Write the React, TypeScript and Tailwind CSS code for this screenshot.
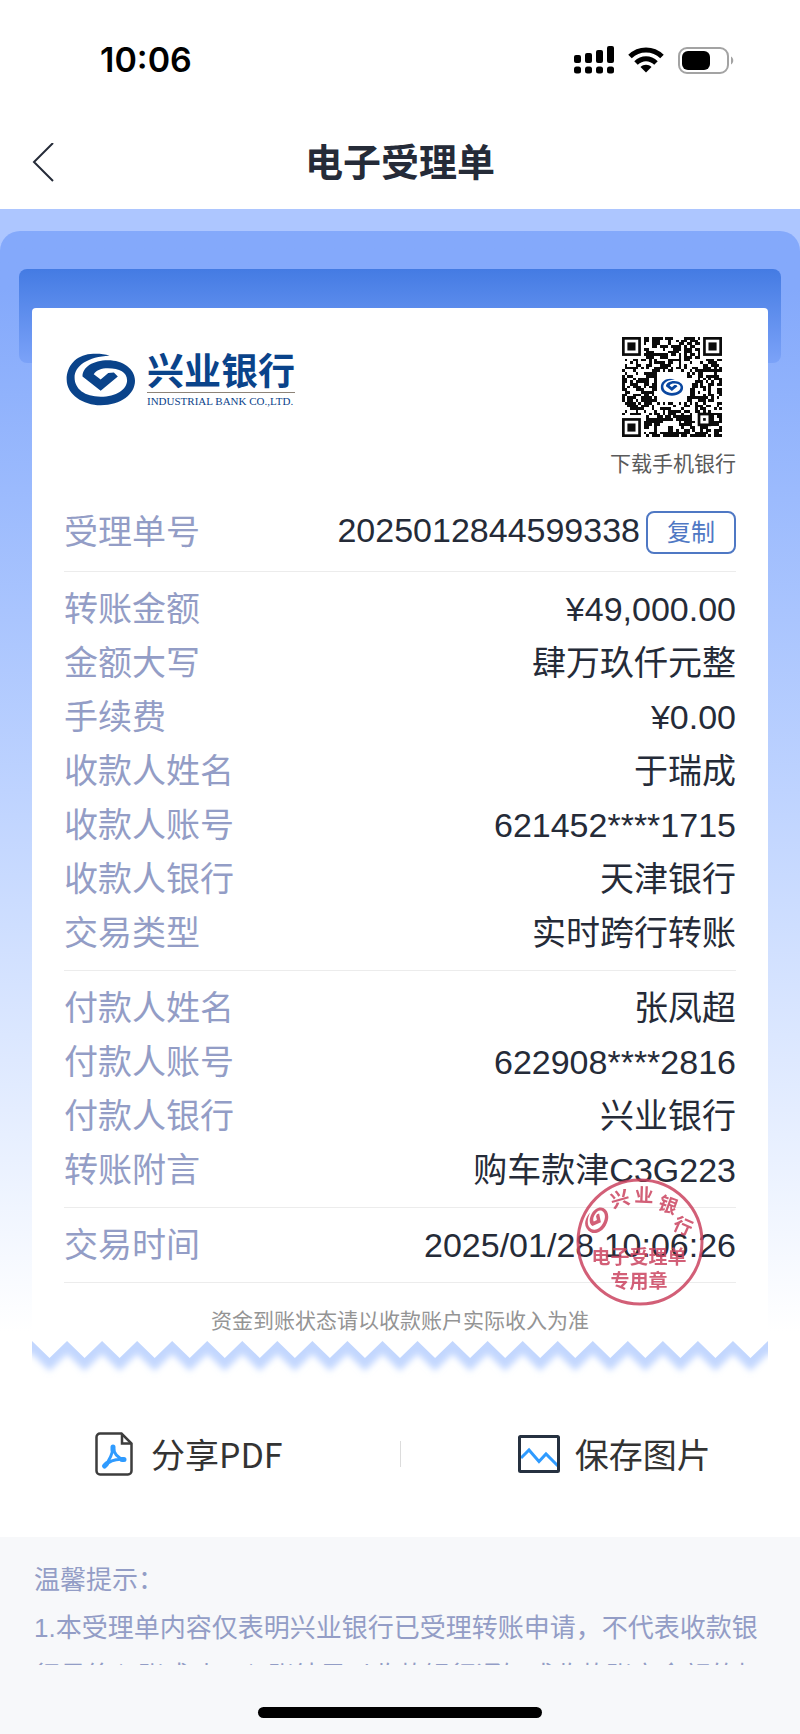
/**
 * ReceiptPage — electronic acceptance slip for a completed bank transfer.
 *
 * Shows the status bar, the slip itself (logo, QR code, transfer details,
 * seal), the share / save actions and the notice at the bottom.
 */

interface DetailRow {
  label: string;
  value: string;
}

/** Amount and payee details. */
const PAYEE_ROWS: DetailRow[] = [
  { label: '转账金额', value: '¥49,000.00' },
  { label: '金额大写', value: '肆万玖仟元整' },
  { label: '手续费', value: '¥0.00' },
  { label: '收款人姓名', value: '于瑞成' },
  { label: '收款人账号', value: '621452****1715' },
  { label: '收款人银行', value: '天津银行' },
  { label: '交易类型', value: '实时跨行转账' },
];

/** Payer details. */
const PAYER_ROWS: DetailRow[] = [
  { label: '付款人姓名', value: '张凤超' },
  { label: '付款人账号', value: '622908****2816' },
  { label: '付款人银行', value: '兴业银行' },
  { label: '转账附言', value: '购车款津C3G223' },
];

const TIME_ROWS: DetailRow[] = [{ label: '交易时间', value: '2025/01/28 10:06:26' }];

const SWIRL_PATH =
  'M330 464C312 458 290 457 272 459C228 463 200 495 200 536C200 582 250 614 303 614C365 614 407 580 407 540C407 504 370 478 325 478C280 478 248 499 248 527L303 570L355 527L343 515L326 516L303 536L282 520C290 508 305 502 325 502C360 502 383 515 383 538C383 566 350 588 303 588C255 588 224 565 224 530C224 495 265 466 330 464Z';

function BankSwirl({ className }: { className: string }) {
  return (
    <svg viewBox="198 456 212 160" className={className} fill="currentColor" aria-hidden="true">
      <path d={SWIRL_PATH} />
    </svg>
  );
}

const QR_SIZE = 37;

/** True when the module lies in one of the three finder squares or their margin. */
function inFinder(x: number, y: number) {
  const nearLeft = x < 8;
  const nearTop = y < 8;
  return (nearLeft && nearTop) || (x > QR_SIZE - 9 && nearTop) || (nearLeft && y > QR_SIZE - 9);
}

function buildQrPath() {
  let seed = 20250128;
  let d = '';
  for (let y = 0; y < QR_SIZE; y++) {
    for (let x = 0; x < QR_SIZE; x++) {
      seed = (seed * 1103515245 + 12345) % 2147483648;
      const inCentre = x > 12 && x < 24 && y > 12 && y < 24;
      const inAlign = x > 27 && x < 33 && y > 27 && y < 33;
      if (inFinder(x, y) || inCentre || inAlign) continue;
      if (seed / 2147483648 < 0.52) d += `M${x} ${y}h1v1h-1z`;
    }
  }
  return d;
}

const QR_PATH = buildQrPath();

const FINDERS = [
  [0, 0],
  [30, 0],
  [0, 30],
];

function QrCode() {
  return (
    <svg viewBox="0 0 37 37" className="size-[100px]" role="img" aria-label="下载手机银行">
      <path d={QR_PATH} fill="#0b0b0b" shapeRendering="crispEdges" />
      {FINDERS.map(([x, y]) => (
        <g key={`${x}-${y}`} fill="none" stroke="#0b0b0b">
          <rect x={x + 0.5} y={y + 0.5} width="6" height="6" />
          <rect x={x + 2} y={y + 2} width="3" height="3" fill="#0b0b0b" stroke="none" />
        </g>
      ))}
      <rect x="28.5" y="28.5" width="4" height="4" fill="none" stroke="#0b0b0b" />
      <rect x="30" y="30" width="1" height="1" fill="#0b0b0b" />
      <svg x="14.2" y="15.4" width="8.6" height="6.4" viewBox="198 456 212 160">
        <path d={SWIRL_PATH} fill="#0a47a0" />
      </svg>
    </svg>
  );
}

function StatusBar() {
  return (
    <div className="flex items-center justify-between pt-[38px] pr-[66px] pl-[100px]">
      <span className="font-[Inter,sans-serif] text-[34px] leading-[44px] font-semibold text-black">10:06</span>
      <div className="flex items-center gap-[14px]">
        <svg viewBox="0 0 40 28" className="h-7 w-10" aria-hidden="true">
          <rect x="0" y="9" width="7" height="8" rx="2" />
          <rect x="11" y="7" width="7" height="10" rx="2" />
          <rect x="22" y="4" width="7" height="13" rx="2" />
          <rect x="33" y="0" width="7" height="17" rx="2" />
          <rect x="0" y="20.5" width="7" height="7" rx="2.5" />
          <rect x="11" y="20.5" width="7" height="7" rx="2.5" />
          <rect x="22" y="20.5" width="7" height="7" rx="2.5" />
          <rect x="33" y="20.5" width="7" height="7" rx="2.5" />
        </svg>
        <svg viewBox="0 0 36 26" className="h-[26px] w-9" fill="none" stroke="#000" strokeWidth="5" aria-hidden="true">
          <path d="M2 9.5C11 0.7 25 0.7 34 9.5" />
          <path d="M8 16C14 10.2 22 10.2 28 16" />
          <path d="M12.5 20C15.5 17 20.5 17 23.5 20L18 25.5Z" fill="#000" stroke="none" />
        </svg>
        <svg viewBox="0 0 56 27" className="h-[27px] w-14" aria-hidden="true">
          <rect x="1" y="1" width="49" height="25" rx="8" fill="none" stroke="#a3a3a3" strokeWidth="2" />
          <rect x="4" y="4" width="28" height="19" rx="6" />
          <path d="M53 9.5c3 1.5 3 6.5 0 8z" fill="#a3a3a3" />
        </svg>
      </div>
    </div>
  );
}

function NavBar() {
  return (
    <div className="grid grid-cols-[1fr_auto_1fr] items-center px-8 pt-[53px] pb-[18px]">
      <button type="button" aria-label="返回" className="justify-self-start">
        <svg viewBox="0 0 22 40" className="h-10 w-[22px]" fill="none" stroke="#252b38" strokeWidth="2" aria-hidden="true">
          <path d="M21 0L2 19L21 38" />
        </svg>
      </button>
      <h1 className="text-[38px] leading-[56px] font-bold text-[#252b38]">电子受理单</h1>
    </div>
  );
}

function DetailSection({ rows }: { rows: DetailRow[] }) {
  return (
    <dl className="border-b border-[#ececec] py-[10px] text-[34px] leading-[54px]">
      {rows.map((row) => (
        <div key={row.label} className="flex justify-between">
          <dt className="text-[#939dc6]">{row.label}</dt>
          <dd className="text-[#252b38]">{row.value}</dd>
        </div>
      ))}
    </dl>
  );
}

/** Round red seal that lies over the transaction time. */
function Seal() {
  return (
    <svg
      viewBox="0 0 128 128"
      className="pointer-events-none absolute -top-[30px] right-8 size-32 opacity-85"
      fill="#cb4460"
      textAnchor="middle"
      aria-hidden="true"
    >
      <circle cx="64" cy="64" r="62" fill="none" stroke="#cb4460" strokeWidth="3" />
      <svg x="7" y="28" width="28" height="28" viewBox="0 0 26 26">
        <g transform="rotate(-62 13 13)">
          <svg x="0" y="3" width="26" height="20" viewBox="198 456 212 160">
            <path d={SWIRL_PATH} />
          </svg>
        </g>
      </svg>
      <g fontSize="19" fontWeight="700">
        <text x="44" y="28" transform="rotate(-16 44 21)">兴</text>
        <text x="68" y="24" transform="rotate(2 68 17)">业</text>
        <text x="92" y="34" transform="rotate(20 92 27)">银</text>
        <text x="107" y="55" transform="rotate(24 107 48)">行</text>
        <text x="63" y="86">电子受理单</text>
        <text x="63" y="110">专用章</text>
      </g>
    </svg>
  );
}

/** Lower edge of the slip: 21 teeth with a soft blue shadow below. */
const TEETH = 21;
const TOOTH = 736 / TEETH;

function zigzag(top: number) {
  let d = `M0 ${top}`;
  for (let i = 0; i < TEETH; i++) {
    d += `L${(i + 0.5) * TOOTH} ${top + 17}L${(i + 1) * TOOTH} ${top}`;
  }
  return d;
}

function TornEdge() {
  return (
    <svg viewBox="0 0 736 40" className="block w-full" aria-hidden="true">
      <defs>
        <filter id="soft" x="-5%" y="-50%" width="110%" height="200%">
          <feGaussianBlur stdDeviation="3" />
        </filter>
      </defs>
      <path d={`${zigzag(16)}L760 16V-20H-24V16Z`} fill="#c3d7fe" filter="url(#soft)" />
      <path d={`${zigzag(3)}V0H0Z`} fill="#fff" />
    </svg>
  );
}

function Slip() {
  return (
    <article className="rounded-t-sm bg-white">
      <div className="px-8 pt-[29px]">
        <div className="flex items-start justify-between">
          <div className="flex items-start gap-[11px] pt-4 pl-[2px] text-[#0a438a]">
            <BankSwirl className="h-[53px] w-[70px]" />
            <div className="flex flex-col">
              <span className="border-b border-[#8d8378] text-[37px] leading-[39px] font-bold">兴业银行</span>
              <span className="font-['Liberation_Serif',serif] text-[11px] leading-[16px]">INDUSTRIAL BANK CO.,LTD.</span>
            </div>
          </div>
          <div className="flex flex-col items-end">
            <div className="pr-[14px]">
              <QrCode />
            </div>
            <span className="mt-3 text-[21px] leading-[30px] text-[#5a5a5a]">下载手机银行</span>
          </div>
        </div>

        {/* ── Slip number ── */}
        <div className="mt-[21px] flex items-start border-b border-[#ececec] pt-[11px] pb-[17px] text-[34px] leading-[43px]">
          <span className="text-[#939dc6]">受理单号</span>
          <span className="ml-auto leading-[38px] text-[#252b38]">2025012844599338</span>
          <button
            type="button"
            className="ml-[6px] flex h-[43px] w-[90px] items-center justify-center rounded-lg border-2 border-[#4f78c4] text-2xl text-[#4f78c4]"
          >
            复制
          </button>
        </div>

        <DetailSection rows={PAYEE_ROWS} />
        <DetailSection rows={PAYER_ROWS} />
        <div className="relative">
          <DetailSection rows={TIME_ROWS} />
          <Seal />
        </div>

        <p className="pt-[22px] pb-px text-center text-[21px] leading-[32px] text-[#949494]">
          资金到账状态请以收款账户实际收入为准
        </p>
      </div>
    </article>
  );
}

function Actions() {
  return (
    <div className="grid grid-cols-[1fr_auto_1fr] items-center pt-[49px] pb-14 font-['Noto_Sans_CJK_SC',sans-serif] text-[34px] leading-[54px] text-[#333]">
      <button type="button" className="flex items-center justify-center gap-[18px] pr-[22px]">
        <svg viewBox="0 0 38 44" className="h-11 w-[38px]" fill="none" aria-hidden="true">
          <path
            d="M5 1.5H26.5L36.5 11.5V39a3.5 3.5 0 0 1-3.5 3.5H5A3.5 3.5 0 0 1 1.5 39V5A3.5 3.5 0 0 1 5 1.5Z"
            stroke="#3d3d3d"
            strokeWidth="2.5"
          />
          <path d="M27 2V11.5H36" stroke="#3d3d3d" strokeWidth="2.5" />
          <path
            d="M18 15C19 22 22 26 29 27.5C21 26.5 15 28.5 9.5 34C14 29 17.5 23 18 15Z"
            stroke="#2f9bff"
            strokeWidth="3"
            strokeLinejoin="round"
          />
          <path d="M18 15V18M27 27.5H29M9.5 34L11.5 32" stroke="#2f9bff" strokeWidth="5" strokeLinecap="round" />
        </svg>
        分享PDF
      </button>
      <span className="h-[26px] w-px bg-[#dcdcdc]" />
      <button type="button" className="flex items-center justify-center gap-[15px] pl-7">
        <svg viewBox="0 0 42 38" className="h-[38px] w-[42px]" fill="none" aria-hidden="true">
          <path d="M3 23L11 15L21 26.5L28 19L40 31" stroke="#2f9bff" strokeWidth="3" />
          <rect x="1.5" y="1.5" width="39" height="35" rx="1" stroke="#263140" strokeWidth="3" />
        </svg>
        保存图片
      </button>
    </div>
  );
}

function Notice() {
  return (
    <footer className="bg-[#f7f8fa] px-[34px] pt-[19px] pb-4 text-[26px] leading-[48px] text-[#939dc6]">
      <div className="h-[109px] overflow-hidden">
        <h2>温馨提示：</h2>
        <p>1.本受理单内容仅表明兴业银行已受理转账申请，不代表收款银行最终入账成功，入账结果以收款银行通知或收款账户余额的打</p>
      </div>
      <div className="mx-auto mt-[42px] h-[11px] w-[284px] rounded-full bg-black" />
    </footer>
  );
}

export default function App() {
  return (
    <div className="min-h-screen bg-white font-['Liberation_Sans','Noto_Sans_CJK_SC',sans-serif]">
      <header>
        <StatusBar />
        <NavBar />
      </header>

      <main>
        <div className="bg-[#adc6ff] pt-[22px]">
          <div className="rounded-t-[20px] bg-linear-to-b from-[#84a9fb] from-5% to-white to-96% pt-[38px]">
            <div className="relative isolate mx-[19px] px-[13px] pt-[39px]">
              {/* Printer slot, the slip comes out of it */}
              <div className="absolute inset-x-0 top-0 -z-10 h-[94px] rounded-lg bg-linear-to-b from-[#447be3] to-[#7ba2f8]" />
              <Slip />
              <TornEdge />
            </div>
          </div>
        </div>
        <Actions />
      </main>

      <Notice />
    </div>
  );
}
